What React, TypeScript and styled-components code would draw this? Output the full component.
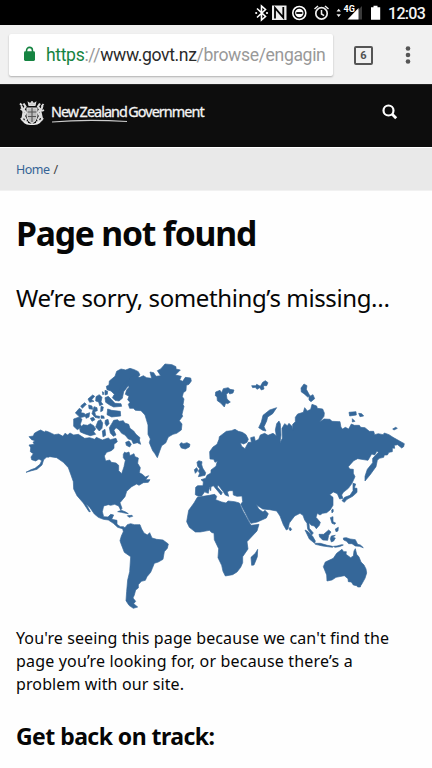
import React from "react";
import styled, { createGlobalStyle } from "styled-components";

const GlobalStyle = createGlobalStyle`
  *, *::before, *::after { box-sizing: border-box; }
  body { margin: 0; background: #fefefe; overflow: hidden; }
  h1, h2, p { margin: 0; }
`;

const Screen = styled.div`
  width: 432px;
  height: 768px;
  overflow: hidden;
  display: flex;
  flex-direction: column;
  background: #fefefe;
  color: #060606;
  font-family: "Noto Sans", "Open Sans", sans-serif;
`;

const StatusBar = styled.div`
  height: 25px;
  flex: none;
  background: #000;
  display: flex;
  justify-content: flex-end;
`;

const StatusIcons = styled.svg`
  width: 132px;
  height: 25px;
  flex: none;
`;

const Clock = styled.time`
  width: 47px;
  padding-left: 3px;
  color: #f4f4f4;
  font: 500 16px/27px Roboto, sans-serif;
  letter-spacing: -0.7px;
  white-space: nowrap;
`;

const BrowserBar = styled.div`
  height: 59px;
  flex: none;
  display: flex;
  align-items: center;
  padding: 1px 0 0 9px;
  background: #f1f1f1;
`;

const AddressBox = styled.div`
  width: 324px;
  height: 42px;
  display: flex;
  align-items: center;
  padding-left: 15px;
  background: #fff;
  border-radius: 2px;
  box-shadow: 0 1px 2px rgba(0, 0, 0, 0.28);
`;

const LockIcon = styled.svg`
  width: 11px;
  height: 16px;
  flex: none;
  margin-top: -3px;
`;

const Url = styled.span`
  margin-left: 11px;
  color: #999;
  font: 400 17.6px/24px Roboto, sans-serif;
  white-space: nowrap;
  letter-spacing: -0.36px;
`;

const UrlPart = styled.span<{ $tone: string }>`
  color: ${(p) => p.$tone};
`;

const TabCount = styled.div`
  width: 19px;
  height: 19px;
  margin-left: 21px;
  border: 2px solid #555;
  border-radius: 2px;
  color: #505050;
  font: 700 11px/15px Roboto, sans-serif;
  text-align: center;
`;

const MenuIcon = styled.svg`
  width: 6px;
  height: 20px;
  margin-left: 32px;
`;

const SiteHeader = styled.header`
  height: 63px;
  flex: none;
  display: flex;
  justify-content: space-between;
  padding: 16px 34px 0 18px;
  background: #0d0d0d;
  border-top: 1px solid #242424;
`;

const Brand = styled.div`
  display: flex;
`;

const Crest = styled.svg`
  width: 28px;
  height: 25px;
`;

const Wordmark = styled.div`
  width: 156px;
  margin-left: 5px;
`;

const WordmarkText = styled.div`
  color: #f5f5f5;
  font: 400 14.4px/21px "Noto Sans", sans-serif;
  letter-spacing: -0.95px;
  word-spacing: -1.4px;
  white-space: nowrap;
  -webkit-text-stroke: 0.3px #f5f5f5;
`;

const Underline = styled.svg`
  display: block;
  width: 78px;
  height: 4px;
  margin-top: -3px;
`;

const SearchIcon = styled.svg`
  width: 16px;
  height: 16px;
  margin-top: 3px;
`;

const Breadcrumb = styled.nav`
  height: 44px;
  flex: none;
  padding: 1px 16px 0;
  background: #e9e9e9;
  border-top: 1px solid #fff;
  color: #444;
  font-size: 12.5px;
  line-height: 41px;
  border-bottom: 1px solid #f1f1f1;
`;

const Crumb = styled.a`
  color: #356496;
  margin-right: 4px;
  letter-spacing: -0.5px;
`;

const Content = styled.main`
  padding: 19px 16px 0;
`;

const Title = styled.h1`
  font-size: 33.7px;
  line-height: 46px;
  font-weight: 700;
  letter-spacing: -1.2px;
  white-space: nowrap;
`;

const Lead = styled.p`
  margin-top: 25px;
  font-size: 24px;
  line-height: 34px;
  letter-spacing: -0.39px;
  white-space: nowrap;
`;

const WorldMap = styled.svg`
  display: block;
  width: 400px;
  height: 270px;
  margin-top: 35px;
  fill: #356799;
  stroke: #356799;
  stroke-width: 2;
  stroke-linejoin: round;
`;

const Message = styled.p`
  margin-top: 6.5px;
  font-size: 16px;
  line-height: 23.3px;
`;

const Line = styled.span<{ $spacing: number }>`
  display: block;
  white-space: nowrap;
  letter-spacing: ${(p) => p.$spacing}px;
`;

const Subtitle = styled.h2`
  margin-top: 23.5px;
  font-size: 23px;
  line-height: 32px;
  font-weight: 700;
  letter-spacing: -0.55px;
  white-space: nowrap;
`;

function StatusIconRow() {
  return (
    <StatusIcons viewBox="253 0 132 25">
      <path d="M257 8.5l8.5 8L261.5 20V6l4 3.5-8.5 8" fill="none" stroke="#fff" strokeWidth="1.6" />
      <circle cx="256.2" cy="13" r="1.1" fill="#fff" />
      <circle cx="267" cy="13" r="1.1" fill="#fff" />
      <path d="M272 5.5h14.5v14.5H272z" fill="#eee" />
      <path d="M275 18.5V8l8.3 9.5V7" fill="none" stroke="#000" strokeWidth="1.8" />
      <circle cx="299.3" cy="13" r="6.5" fill="none" stroke="#fff" strokeWidth="1.6" />
      <circle cx="299.3" cy="13" r="4.2" fill="#fff" />
      <path d="M296.3 13h6" stroke="#000" strokeWidth="1.8" />
      <circle cx="321.5" cy="13.4" r="5.7" fill="none" stroke="#eee" strokeWidth="1.7" />
      <path d="M321.5 10v4l2.6 1.7M314.5 9l3.5-3M328.5 9l-3.5-3" fill="none" stroke="#eee" strokeWidth="1.5" />
      <path d="M336.5 11.5l2.2-2.7 2.2 2.7zM336.500 14.300l2.200 2.700 2.200-2.700z" fill="#eee" />
      <path d="M362 6v13.5h-13z" fill="#3a3a3a" />
      <path d="M358.5 8v11.5H347.5z" fill="#fff" />
      <text x="343.6" y="11.6" fill="#fff" fontFamily="Roboto" fontSize="9" fontWeight="700">4G</text>
      <path d="M371 7.3h2.5V5.8h4v1.5h2.7v12.4H371z" fill="#fff" />
    </StatusIcons>
  );
}

function CoatOfArms() {
  return (
    <Crest viewBox="0 0 28 25" fill="none" stroke="#ddd" strokeWidth="1.1">
      <path d="M11 4.5l-.7-3 2 1.2L14 .5l1.7 2.2 2-1.2-.7 3z" fill="#ccc" />
      <path d="M9 7h10v8q-.5 5-5 7-4.5-2-5-7z" fill="#bbb" />
      <path d="M14 7v14M9.5 11h9M10 15.5h8" stroke="#555" />
      <path d="M5.5 2.5l2 3-2 3 2.5 3-2 3.5 2 3.5-1 3M3.5 5l2 6-1 7M22 2.5l-2 3 2 3-2 3 2 3.5-2 3.5 1 2M24.5 5l-2 6 1.5 7" strokeWidth="2.1" />
      <path d="M2 2.5l2 2M2.5 8l2 1M25.5 3l-2 2.5M26 9l-2 1M3 17q2 4 7 4.5M25 17q-2 4-7 4.5" strokeWidth="1.8" />
      <path d="M6 21q4 3 8 2 4 1 8-2" stroke="#eee" strokeWidth="1.7" />
    </Crest>
  );
}

/* Coastlines are plotted at three units per pixel. */
function Map() {
  return (
    <WorldMap viewBox="16 350 400 270" role="img" aria-label="World map">
      {/* Canada, Alaska and the Arctic islands */}
      <g transform="translate(15 355) scale(.33333)">
        <path d="M77 225L68 229 58 235 55 243 42 245 50 254 60 257 54 262 58 268 42 270 47 278 46 290 55 296 48 306 50 314 62 318 72 312 80 317 75 328 60 340 48 344 33 352 50 347 66 343 81 330 86 314 94 307 105 305 125 308 145 322 160 338 168 360 175 380 176 402 186 422 205 444 222 470 226 470 213 446 225 458 238 477 250 487 265 493 280 495 295 505 308 517 325 522 326 515 316 515 306 508 306 496 290 493 296 480 287 478 279 486 266 485 262 470 266 453 280 449 287 451 299 448 311 453 317 465 321 460 315 443 330 425 335 409 350 395 365 387 372 391 385 383 400 382 405 374 392 374 401 362 391 366 382 358 373 353 376 338 368 325 370 309 360 305 357 296 345 302 342 291 333 294 329 291 325 298 325 308 331 316 327 335 320 356 311 347 311 331 303 324 289 322 284 315 272 318 268 303 275 292 289 287 297 280 297 268 307 260 303 250 286 254 280 249 262 255 244 247 239 253 224 248 209 250 190 238 176 240 165 234 158 240 150 235 144 244 131 237 118 239 101 231 92 228 88 231z" />
        <path d="M283 78L300 64 305 49 318 42 332 45 345 40 358 44 370 50 375 60 362 72 350 78 342 90 334 100 326 110 322 130 312 138 300 136 292 128 298 118 288 108 276 104 274 94 282 90zM270 128L280 124 290 134 300 145 318 146 320 154 296 156 284 150 272 142zM278 162L290 166 316 169 317 183 290 186 276 179z" />
        <path d="M176 192l17-6 8 7-5 15 4 8-13 8-11-10zM194 222L204 209 218 211 226 206 236 212 242 222 236 230 242 238 226 242 208 236 196 231z" />
        <path d="M181 174l12-14 7 5-2 8 10 2 4 9-17 4-6-7zM197 153l12-10 5 5-12 12zM219 132l14-12 6 4-9 10 7 5-13 3zM221 150l10 3 2 10-11-2zM211 178l13-5-2 13-9 4zM243 125l10-6 8 8-3 14 6 7-10 4-3-11-9-3zM237 155l9 3 1 9-8 3 3 12 12 2-1 6-13-3-9-11zM258 154l7 2-2 11-6 3zM258 182l8 1 2 7-10 0zM226 190l9-3 5 7-9 5zM270 106l8 3-1 9-7 2zM262 110l5 3-3 7z" />
        <path d="M249 198l8-4 6 10-2 16-8 8-11-12zM271 196l8-3 3 13-7 8-5-9zM262 228l8-5 2 18-8 5zM292 203L296 196 308 194 312 199 325 197 329 204 341 208 345 220 356 228 363 238 375 248 373 255 377 268 367 263 355 266 350 255 340 252 330 240 320 235 312 224 303 218 297 226 303 240 295 244 286 234 283 218zM332 262l10-4 7 10-5 8-10-5z" />
        <path d="M97 302l8-2-5 7z" />
        <path d="M308 470l11-4 13 5 8 5-12-2-9-2zM337 482l14-1 2 3-11 3z" />
      </g>
      {/* South America */}
      <g transform="translate(15 480) scale(.33333)">
        <path d="M323 145L332 141 337 134 347 131 358 134 375 134 380 147 387 159 397 165 404 158 411 174 425 178 444 180 460 192 457 205 448 215 444 238 430 246 418 250 412 265 407 277 396 290 391 301 379 304 370 314 370 324 362 330 358 345 354 354 362 364 356 371 368 381 355 385 342 376 333 362 335 334 338 300 344 275 347 230 328 217 318 191 315 182 319 168 325 155z" />
      </g>
      {/* Greenland, Europe and Asia */}
      <g transform="translate(140 355) scale(.33333)">
        <path d="M-30 68L-15 59-8 66 0 67 10 62 20 68 35 70 30 51 41 53 48 64 62 62 52 47 62 42 75 27 96 29 108 35 108 42 121 45 106 60 124 64 119 75 128 79 136 67 152 69 154 78 147 88 139 91 138 107 130 113 127 125 132 132 129 149 132 154 126 178 128 184 118 197 126 207 124 225 110 235 99 238 85 246 77 264 65 272 60 286 52 308 44 295 38 287 28 263 31 252 24 238 24 210 15 180 3 167-14 166-20 160-31 160-35 148-30 142-37 134-33 124-44 118-40 104-33 97-36 84z" />
        <path d="M-38 76L-50 86-61 101-65 113-58 111-47 99z" />
        <path d="M119 269l4-6 8 3 10-3 9 5-2 8-12 6-12-3zM227 111l13-5 5 7 5-12 15-3 5 5 12 2-3 9-10 3-3-5-7 6 2 14 10 9-8 5-6-2-4 12-11-12-10-7-1-12-5-3zM335 92l12 0 3-4 11 6 7-12 8-5 8 6-4 9-10 0 2 10-8 3-5-7-8 5-5-6-8 1z" />
        <path d="M410 158l-21 7-20 16-5 20-8 17 12 8 10 2-6-13 8-17 3-12 15-10zM171 322l5-5 10 3-1 9 3 10 9 14-2 8-20 4 4-10-4-6 4-8-6-7zM163 344l7-6 4 8-8 9z" />
        <path d="M210 312L209 290 219 276 231 268 237 253 238 245 259 229 274 227 285 223 295 229 307 232 318 239 325 253 321 262 311 267 301 263 305 274 315 281 325 262 334 262 332 248 343 245 346 258 356 253 361 240 374 235 384 241 399 235 409 242 406 225 410 206 417 198 421 207 423 240 420 263 427 250 426 220 434 206 442 212 447 205 456 214 458 226 458 208 466 200 466 187 473 177 490 172 494 158 502 168 512 163 516 148 530 153 532 160 548 162 553 174 552 184 539 201 552 192 570 193 576 199 600 200 603 217 608 222 616 217 626 222 634 207 643 211 658 211 662 217 675 218 688 229 701 229 704 239 715 236 729 239 733 234 747 239 759 247 793 266 791 275 785 279 773 269 763 271 764 280 757 279 757 290 747 292 742 300 733 300 731 307 718 310 712 316 708 335 690 360 675 378 675 364 682 343 698 323 698 310 715 292 711 288 704 300 695 297 684 316 653 311 641 317 625 335 629 342 640 343 640 355 645 365 636 385 625 400 610 412 605 420 609 430 599 432 592 416 580 411 569 419 579 427 579 451 571 464 560 473 548 475 540 480 532 475 528 487 541 502 538 511 529 521 523 513 514 511 507 503 508 520 520 534 515 540 503 522 501 505 494 495 489 481 480 475 464 483 448 504 444 522 439 525 430 509 420 483 410 468 389 464 368 462 353 452 349 448 356 462 369 471 375 466 385 476 379 489 352 501 333 505 327 496 315 472 302 448 308 440 306 423 291 424 280 420 279 407 269 407 262 410 266 424 256 420 250 410 239 396 234 390 232 396 247 413 243 420 235 410 224 397 220 392 210 397 203 408 194 410 185 423 175 424 166 419 167 397 173 392 189 392 190 380 183 374 197 370 201 361 213 354 213 345 222 338 228 334 232 318 225 322 221 313z" />
      </g>
      {/* Islands north of Siberia and around Japan */}
      <g transform="translate(280 355) scale(.33333)">
        <path d="M63 99l9-12 9 5-2 11 11 20-7 3-11-10-8-5zM87 125l12-6 5 12-11 9-6-5zM207 172l21-2 1 10-20 3zM236 175l9 1 6 7-11 2zM217 191l8 8-8 2zM338 222l9-5 5 3-10 5z" />
        <path d="M219 385l8 2-4 12 8 1 0 12-13 12-17 9-8 9-7-5 8-10 16-6 9-14zM155 465l4-3 1 7-4 5zM151 488l8-3 0 15 8 4-3 4-8-3zM166 522l9-5-1 11-6 2zM30 517l5 6-4 5-4-6z" />
      </g>
      {/* Indonesia and Oceania */}
      <g transform="translate(280 480) scale(.33333)">
        <path d="M75 150l8 4 15 15 8 14-2 7-16-13zM106 190l15 0 21 6 16 3 0 3-30-4-22-5zM160 199l11-1 14-4 5 1-12 5-13 2zM117 163l14 0 15-13 7 6-7 10-3 15-15-1-9-9zM154 168l12-2-8 6 8 2-5 9-7 3-3-10zM190 174l9-1 11 4 16 2 7 14 8 2 9 8-12-4-12-1-10-7-10 0-6-7-9-4z" />
        <path d="M130 260l6-14 24-11 10-15 16-12 5 7 8 0-1 8 14 10 8-5 2-15 4-7 4 17 7 8 6 15 9 9 6 12 2 12-5 16-10 18-12 5-13-3-6-9-9-1-1-9-11-9-25 5-12 8-15 3-1-18zM230 309l15 0-4 12-8 0z" />
      </g>
      {/* Africa */}
      <g transform="translate(170 480) scale(.33333)">
        <path d="M82 52L99 49 118 46 134 43 140 49 137 59 155 66 168 69 174 63 194 65 208 69 219 93 237 125 243 136 267 133 261 153 231 185 234 207 218 230 218 248 212 262 201 276 188 284 166 288 159 274 155 256 144 233 146 206 133 179 132 159 126 158 118 151 91 156 76 156 58 142 50 125 56 91 72 69zM263 208l-1 22-10 25-7 1-2-24 13-12zM106 37l4-6 7-3-2 12zM119 26l4-5-1 11z" />
      </g>
    </WorldMap>
  );
}

export default function App() {
  return (
    <>
      <GlobalStyle />
      <Screen>
        <StatusBar>
          <StatusIconRow />
          <Clock>12:03</Clock>
        </StatusBar>
        <BrowserBar>
          <AddressBox>
            <LockIcon viewBox="0 0 12 17">
              <path d="M2.8 7V4.5a3.2 3.2 0 0 1 6.4 0V7" fill="none" stroke="#168442" strokeWidth="1.7" />
              <rect y="5.5" width="12" height="10.5" rx="1.4" fill="#168442" />
            </LockIcon>
            <Url>
              <UrlPart $tone="#168442">https</UrlPart>://
              <UrlPart $tone="#2b2b2b">www.govt.nz</UrlPart>/browse/engagin
            </Url>
          </AddressBox>
          <TabCount>6</TabCount>
          <MenuIcon viewBox="0 0 6 20" fill="#555">
            <circle cx="3" cy="3.5" r="2.3" />
            <circle cx="3" cy="10" r="2.3" />
            <circle cx="3" cy="16.5" r="2.3" />
          </MenuIcon>
        </BrowserBar>
        <SiteHeader>
          <Brand>
            <CoatOfArms />
            <Wordmark>
              <WordmarkText>New Zealand Government</WordmarkText>
              <Underline viewBox="0 0 78 4">
                <path d="M1 3Q35 0 76 2.5" fill="none" stroke="#ccc" strokeWidth="1.2" />
              </Underline>
            </Wordmark>
          </Brand>
          <SearchIcon viewBox="0 0 16 16" fill="none" stroke="#fff">
            <circle cx="6.5" cy="6.5" r="5" strokeWidth="2.2" />
            <path d="M10 10l4.200 4.200" strokeWidth="2.8" />
          </SearchIcon>
        </SiteHeader>
        <Breadcrumb>
          <Crumb>Home</Crumb>/
        </Breadcrumb>
        <Content>
          <Title>Page not found</Title>
          <Lead>We’re sorry, something’s missing…</Lead>
          <Map />
          <Message>
            <Line $spacing={0.11}>You're seeing this page because we can't find the</Line>
            <Line $spacing={0.18}>page you’re looking for, or because there’s a</Line>
            <Line $spacing={0.11}>problem with our site.</Line>
          </Message>
          <Subtitle>Get back on track:</Subtitle>
        </Content>
      </Screen>
    </>
  );
}
